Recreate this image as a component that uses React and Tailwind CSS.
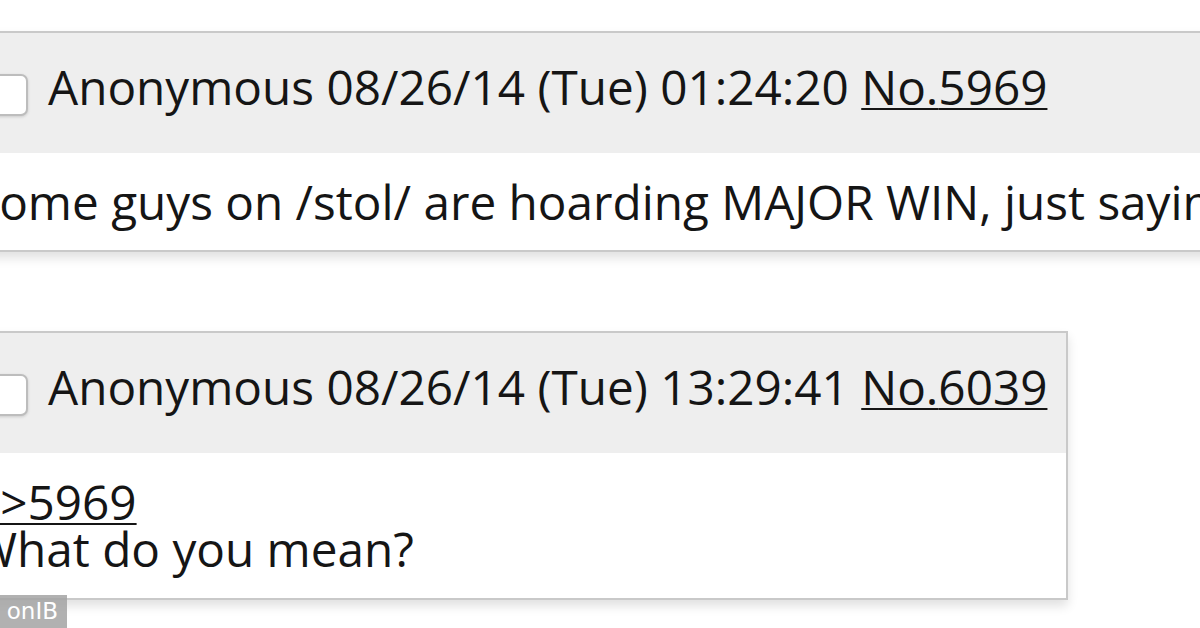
import { useState } from "react";

const Post = ({ num, time, width, children }) => {
  const [checked, setChecked] = useState(false);
  return (
    <div className={`${width} bg-white border-y-2 border-r-2 border-[#c9c9c9] shadow-[0_6px_10px_rgba(0,0,0,0.12)]`}>
      <div className="bg-[#eeeeee] h-[120px] flex items-start pl-[28px] pt-[30px]">
        <button
          type="button"
          onClick={() => setChecked(!checked)}
          className="w-[40px] h-[42px] mt-[11px] rounded-[7px] border-2 border-[#bdbdbd] bg-white shadow-[0_1px_3px_rgba(0,0,0,0.15)] mr-[20px] shrink-0"
        />
        <span className="text-[#151515] whitespace-nowrap">
          Anonymous 08/26/14 (Tue) {time}{" "}
          <a href="#" className="underline decoration-2 underline-offset-[3px]">No.{num}</a>
        </span>
      </div>
      {children}
    </div>
  );
};

const App = () => {
  return (
    <div
      className="relative w-[1200px] h-[628px] overflow-hidden bg-white text-[47.7px] leading-[47px]"
      style={{ fontFamily: '"Open Sans", "Noto Sans", sans-serif' }}
    >
      <div className="-ml-[40px] pt-[31px] flex flex-col gap-[79px]">
        <Post num="5969" time="01:24:20" width="w-[1400px]">
          <div className="h-[97px] pt-[25px] pl-[13px] whitespace-nowrap text-[#151515]">
            Some guys on /stol/ are hoarding MAJOR WIN, just saying
          </div>
        </Post>
        <Post num="6039" time="13:29:41" width="w-[1108px]">
          <div className="h-[145px] pt-[25px] flex flex-col pl-[13px] text-[#151515] whitespace-nowrap">
            <a href="#" className="underline decoration-2 underline-offset-[3px] w-fit">&gt;&gt;5969</a>
            <span>What do you mean?</span>
          </div>
        </Post>
      </div>
      <div className="absolute left-0 bottom-0 h-[33px] w-[67px] bg-[#a3a3a3]/85 flex items-center justify-end pr-[9px] overflow-hidden">
        <span className="text-white text-[23px] leading-none" style={{ fontFamily: '"DejaVu Sans", sans-serif' }}>onIB</span>
      </div>
    </div>
  );
};

export default App;
